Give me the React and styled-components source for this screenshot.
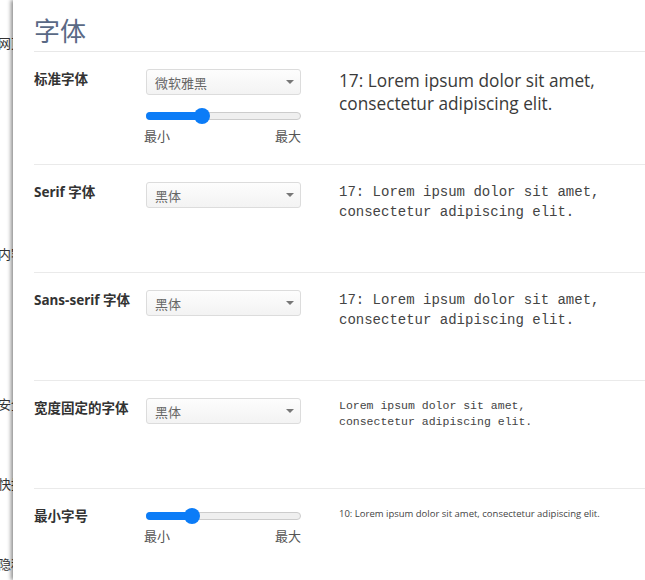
import React from 'react'
import styled, { createGlobalStyle } from 'styled-components'

const GlobalStyle = createGlobalStyle`
  html, body {
    margin: 0;
    padding: 0;
    background: #fff;
  }
  body {
    font-family: "Noto Sans", "Noto Sans CJK SC", sans-serif;
    color: #333;
  }
`

const Page = styled.div`
  display: flex;
  width: 645px;
  height: 580px;
  overflow: hidden;
  background: #fff;
`

const SideBar = styled.div`
  width: 13px;
  flex-shrink: 0;
  overflow: hidden;
  display: flex;
  flex-direction: column;
`

const SideItem = styled.div`
  margin-top: ${(p) => p.$gap}px;
  margin-left: -2px;
  white-space: nowrap;
  font-size: 13px;
  line-height: 20px;
  color: #333;
  font-family: "Noto Sans CJK SC", sans-serif;
`

const Panel = styled.div`
  flex: 1;
  position: relative;
  z-index: 1;
  background: #fff;
  padding-left: 21px;
  box-shadow: -2px 0 4px rgba(0, 0, 0, 0.45);
`

const Title = styled.h1`
  margin: 0;
  padding-top: 12px;
  padding-bottom: 3px;
  border-bottom: 1px solid #e8e8e8;
  font-family: "Noto Sans CJK SC", sans-serif;
  font-size: 26px;
  line-height: 36px;
  font-weight: 400;
  color: #5a6985;
`

const Row = styled.div`
  display: grid;
  grid-template-columns: 112px 155px 1fr;
  align-items: start;
  box-sizing: border-box;
  min-height: ${(p) => p.$minHeight || 108}px;
  padding: 17px 0;
  border-top: ${(p) => (p.$first ? 'none' : '1px solid #eaeaea')};
`

const Label = styled.div`
  font-family: "Noto Sans", "Noto Sans CJK SC", sans-serif;
  font-size: 13.5px;
  line-height: 20px;
  font-weight: 700;
  color: #333;
  white-space: nowrap;
`

const Controls = styled.div`
  display: flex;
  flex-direction: column;
`

const Select = styled.div`
  box-sizing: border-box;
  height: 26px;
  border: 1px solid #dcdcdc;
  border-radius: 3px;
  background: linear-gradient(#fdfdfd, #f3f3f3);
  display: flex;
  align-items: center;
  justify-content: space-between;
  padding: 0 6px 0 8px;
  font-family: "Noto Sans CJK SC", sans-serif;
  font-size: 13px;
  color: #666;
`

const Arrow = styled.span`
  width: 0;
  height: 0;
  border-left: 4px solid transparent;
  border-right: 4px solid transparent;
  border-top: 4px solid #777;
`

const SliderBox = styled.div`
  margin-top: ${(p) => p.$gap}px;
  height: 20px;
  display: flex;
  align-items: center;
`

const Track = styled.div`
  position: relative;
  width: 100%;
  height: 8px;
  box-sizing: border-box;
  border: 1px solid #cccccc;
  border-radius: 4px;
  background: #efefef;
`

const Fill = styled.div`
  position: absolute;
  left: -1px;
  top: -1px;
  bottom: -1px;
  border-radius: 4px 0 0 4px;
  background: #0b7cf7;
`

const Thumb = styled.div`
  position: absolute;
  top: 50%;
  width: 16px;
  height: 16px;
  margin-left: -8px;
  margin-top: -8px;
  border-radius: 50%;
  background: #0b7cf7;
`

const Ends = styled.div`
  display: flex;
  justify-content: space-between;
  margin-left: -2px;
  font-family: "Noto Sans CJK SC", sans-serif;
  font-size: 13px;
  line-height: 20px;
  color: #555;
`

const Preview = styled.div`
  margin-left: 38px;
  max-width: 266px;
  font-family: ${(p) => p.$font};
  font-size: ${(p) => p.$size}px;
  line-height: ${(p) => p.$lh}px;
  color: ${(p) => p.$color || '#333'};
`

const SANS = '"Open Sans", "Noto Sans CJK SC", sans-serif'
const MONO = '"Liberation Mono", monospace'
const LOREM = 'Lorem ipsum dolor sit amet, consectetur adipiscing elit.'

function Slider({ value, gap }) {
  return (
    <SliderBox $gap={gap}>
      <Track>
        <Fill style={{ width: value + 1 }} />
        <Thumb style={{ left: value }} />
      </Track>
    </SliderBox>
  )
}

function FontSelect({ value }) {
  return (
    <Select>
      <span>{value}</span>
      <Arrow />
    </Select>
  )
}

const sideItems = [
  { text: '网页内容', gap: 33 },
  { text: '内容设置', gap: 191 },
  { text: '安全设置', gap: 130 },
  { text: '快捷键', gap: 60 },
  { text: '隐私设置', gap: 60 },
]

export default function App() {
  return (
    <Page>
      <GlobalStyle />
      <SideBar>
        {sideItems.map((it) => (
          <SideItem key={it.text} $gap={it.gap}>{it.text}</SideItem>
        ))}
      </SideBar>
      <Panel>
        <Title>字体</Title>
        <Row $first $minHeight={112}>
          <Label>标准字体</Label>
          <Controls>
            <FontSelect value="微软雅黑" />
            <Slider value={55} gap={11} />
            <Ends><span>最小</span><span>最大</span></Ends>
          </Controls>
          <Preview $font={SANS} $size={17.25} $lh={23} $color="#3a3a3a">17: {LOREM}</Preview>
        </Row>
        <Row>
          <Label>Serif 字体</Label>
          <Controls>
            <FontSelect value="黑体" />
          </Controls>
          <Preview $font={MONO} $size={14} $lh={20} $color="#444">17: {LOREM}</Preview>
        </Row>
        <Row>
          <Label>Sans-serif 字体</Label>
          <Controls>
            <FontSelect value="黑体" />
          </Controls>
          <Preview $font={MONO} $size={14} $lh={20} $color="#444">17: {LOREM}</Preview>
        </Row>
        <Row>
          <Label>宽度固定的字体</Label>
          <Controls>
            <FontSelect value="黑体" />
          </Controls>
          <Preview $font={MONO} $size={11.5} $lh={16} $color="#444">{LOREM}</Preview>
        </Row>
        <Row>
          <Label>最小字号</Label>
          <Controls>
            <Slider value={45} gap={0} />
            <Ends><span>最小</span><span>最大</span></Ends>
          </Controls>
          <Preview $font={SANS} $size={9.5} $lh={16} $color="#444">10: {LOREM}</Preview>
        </Row>
      </Panel>
    </Page>
  )
}
